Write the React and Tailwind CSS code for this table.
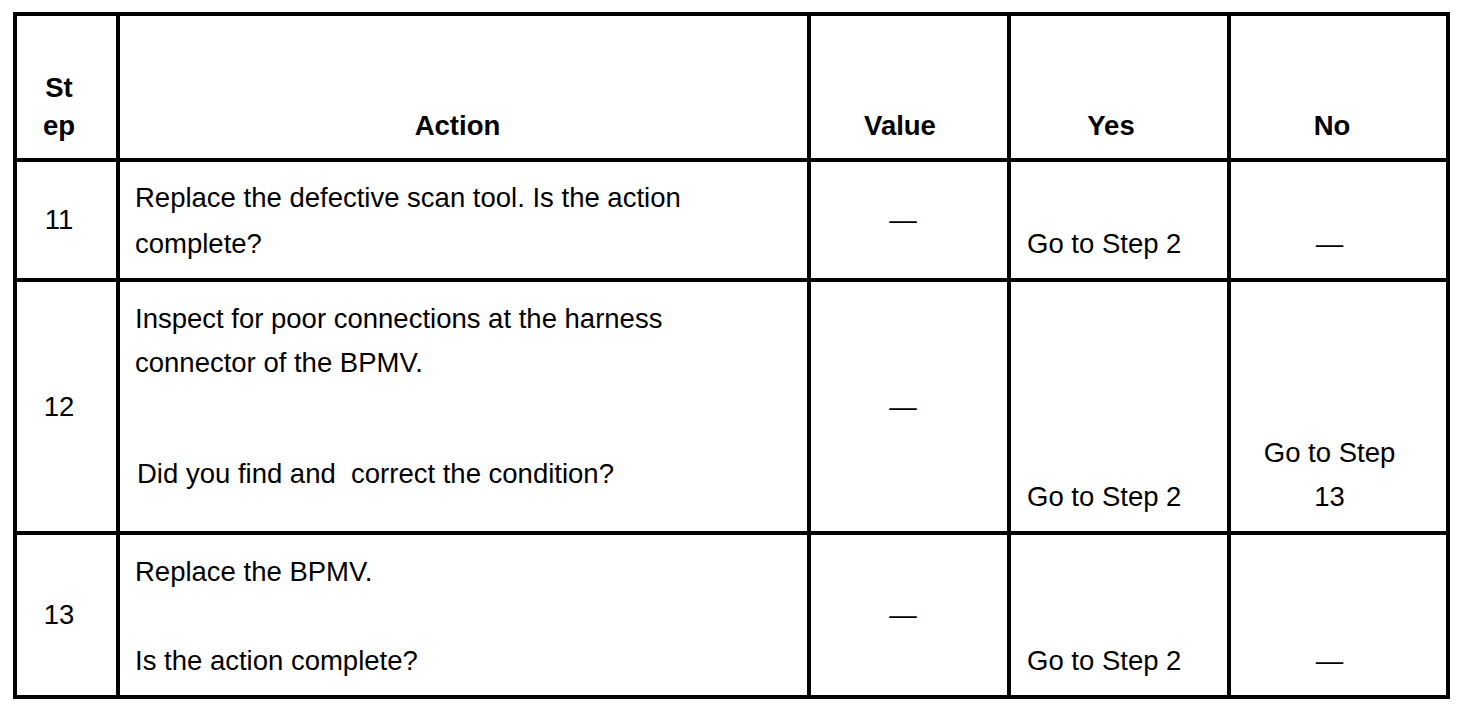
export default function App() {
  const cell = "bg-white";
  return (
    <div className="min-h-screen bg-white text-black" style={{ fontFamily: '"Liberation Sans", Arial, sans-serif' }}>
      <div className="pt-[12px] pl-[13px]">
        <div className="inline-grid grid-cols-[99px_687px_196px_216px_215px] grid-rows-[142px_116px_249px_160px] gap-[4px] p-[4px] bg-black text-[27.5px]">
          {/* header */}
          <div className={`${cell} flex flex-col justify-end items-center pr-[15px] pb-[13px] font-bold leading-[38px] text-center`}>
            <span>St</span>
            <span>ep</span>
          </div>
          <div className={`${cell} flex items-end justify-center pr-[12px] pb-[13px] font-bold leading-[38px]`}>Action</div>
          <div className={`${cell} flex items-end justify-center pr-[18px] pb-[13px] font-bold leading-[38px]`}>Value</div>
          <div className={`${cell} flex items-end justify-center pr-[16px] pb-[13px] font-bold leading-[38px]`}>Yes</div>
          <div className={`${cell} flex items-end justify-center pr-[13px] pb-[13px] font-bold leading-[38px]`}>No</div>

          {/* step 11 */}
          <div className={`${cell} flex items-center justify-center pr-[15px] leading-[44px]`}>11</div>
          <div className={`${cell} pl-[15px] pr-[10px] pt-[13px] leading-[46px]`}>
            <p>Replace the defective scan tool. Is the action</p>
            <p>complete?</p>
          </div>
          <div className={`${cell} flex items-center justify-center pr-[12px] leading-[44px]`}>—</div>
          <div className={`${cell} flex items-end pl-[16px] pb-[12px] leading-[44px]`}>Go to Step 2</div>
          <div className={`${cell} flex items-end justify-center pr-[18px] pb-[12px] leading-[44px]`}>—</div>

          {/* step 12 */}
          <div className={`${cell} flex items-center justify-center pr-[15px] leading-[44px]`}>12</div>
          <div className={`${cell} pl-[15px] pr-[10px] pt-[15px] leading-[44px]`}>
            <p>Inspect for poor connections at the harness</p>
            <p>connector of the BPMV.</p>
            <p className="mt-[67px] pl-[2px] whitespace-pre">Did you find and  correct the condition?</p>
          </div>
          <div className={`${cell} flex items-center justify-center pr-[12px] leading-[44px]`}>—</div>
          <div className={`${cell} flex items-end pl-[16px] pb-[12px] leading-[44px]`}>Go to Step 2</div>
          <div className={`${cell} flex flex-col items-center justify-end pr-[18px] pb-[12px] leading-[44px] text-center`}>
            <span>Go to Step</span>
            <span>13</span>
          </div>

          {/* step 13 */}
          <div className={`${cell} flex items-center justify-center pr-[15px] leading-[44px]`}>13</div>
          <div className={`${cell} pl-[15px] pr-[10px] pt-[15px] leading-[44px]`}>
            <p>Replace the BPMV.</p>
            <p className="mt-[45px]">Is the action complete?</p>
          </div>
          <div className={`${cell} flex items-center justify-center pr-[12px] leading-[44px]`}>—</div>
          <div className={`${cell} flex items-end pl-[16px] pb-[12px] leading-[44px]`}>Go to Step 2</div>
          <div className={`${cell} flex items-end justify-center pr-[18px] pb-[12px] leading-[44px]`}>—</div>
        </div>
      </div>
    </div>
  );
}
